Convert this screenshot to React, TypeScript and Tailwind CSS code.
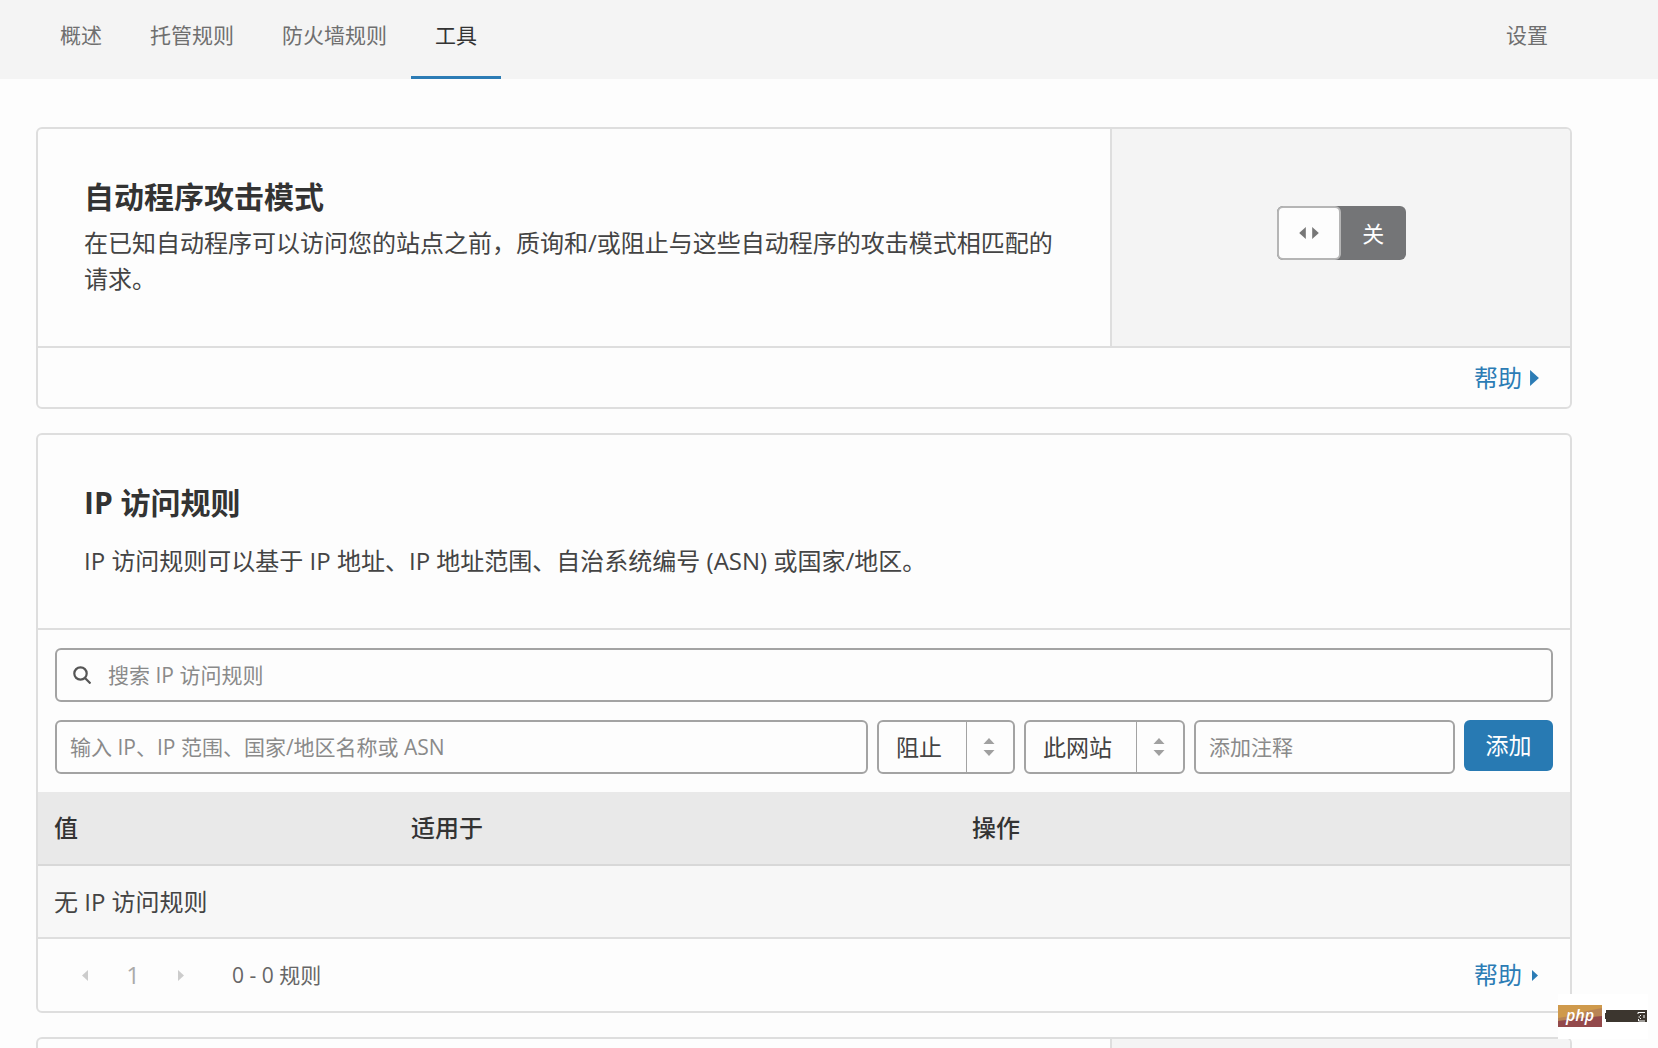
import { useState } from "react"
import type { ReactNode } from "react"

const tabs = ["概述", "托管规则", "防火墙规则", "工具"]

function Triangle({ points, className }: { points: string; className: string }) {
  return (
    <svg viewBox="0 0 10 18" className={className} fill="currentColor" aria-hidden="true">
      <polygon points={points} />
    </svg>
  )
}

function LeftArrow({ className }: { className: string }) {
  return <Triangle points="10,0 10,18 0,9" className={className} />
}

function RightArrow({ className }: { className: string }) {
  return <Triangle points="0,0 0,18 10,9" className={className} />
}

function NavTab({ label, active }: { label: string; active?: boolean }) {
  return (
    <a
      href="#"
      aria-current={active ? "page" : undefined}
      className={
        active
          ? "flex h-[79px] items-center border-b-3 border-[#2c7cb5] px-6 pb-1.5 text-[#333]"
          : "flex h-[79px] items-center border-b-3 border-transparent px-6 pb-1.5 text-[#6f6f6f]"
      }
    >
      {label}
    </a>
  )
}

function Card({ children }: { children: ReactNode }) {
  return <section className="overflow-hidden rounded-md border-2 border-[#dedede] bg-[#fdfdfd]">{children}</section>
}

function Select({ label, options, className }: { label: string; options: string[]; className: string }) {
  return (
    <div className={`relative h-[54px] shrink-0 rounded-md border-2 border-[#a3a3a3] ${className}`}>
      <select
        aria-label={label}
        className="h-full w-full appearance-none bg-transparent pl-[17px] text-[23px] text-[#444] outline-none"
      >
        {options.map((option) => (
          <option key={option}>{option}</option>
        ))}
      </select>
      <span className="pointer-events-none absolute inset-y-0 right-0 flex w-[47px] items-center justify-center border-l border-[#a3a3a3] pr-0.5">
        <svg viewBox="0 0 12 20" className="h-5 w-3 fill-[#a0a0a0]" aria-hidden="true">
          <polygon points="6,1 11.500,7 0.500,7" />
          <polygon points="0.500,13 11.500,13 6,19" />
        </svg>
      </span>
    </div>
  )
}

function Toggle() {
  const [on, setOn] = useState(false)
  return (
    <button
      type="button"
      role="switch"
      aria-checked={on}
      aria-label="自动程序攻击模式"
      onClick={() => setOn(!on)}
      className="flex h-[54px] w-[129px] rounded-md bg-[#747577] text-[22px] text-white"
    >
      <span className="flex h-full w-16 items-center justify-center gap-[6px] rounded-md border-2 border-[#b5b5b5] bg-[#fdfdfd] text-[#777]">
        <LeftArrow className="h-3 w-[7px]" />
        <RightArrow className="h-3 w-[7px]" />
      </span>
      <span className="flex h-full flex-1 items-center justify-center">{on ? "开" : "关"}</span>
    </button>
  )
}

function Watermark() {
  return (
    <div className="absolute right-[10px] bottom-[10px] flex h-[45px] w-[90px] items-start gap-[3px] bg-white pt-[11px]">
      <svg
        viewBox="0 0 44 22"
        className="h-[22px] w-11 overflow-visible font-['Open_Sans',sans-serif] text-[16px] font-semibold italic"
      >
        <rect width="44" height="22" fill="#93494b" />
        <path d="M0 0H44V11L24 13L0 16Z" fill="#b98455" />
        <path d="M0 0H44V3L24 7L12 11L0 13Z" fill="#cf9a4c" />
        <text x="22" y="16" textAnchor="middle" fill="#fff">
          php
        </text>
      </svg>
      <svg viewBox="0 0 42 12" className="mt-[5px] h-3 w-[42px]" aria-hidden="true">
        <path d="M1 0H42V12H1V9H0V3H1Z" fill="#3c362f" />
        <path d="M33 4V2.500H40M33.500 9V11H40M33.500 7H35M35.500 5V6M35.500 8V9M39 5V8" stroke="#fff" fill="none" />
      </svg>
    </div>
  )
}

export default function App() {
  return (
    <div className="relative flex min-h-screen flex-col bg-[#fdfdfd] font-['Open_Sans','Noto_Sans_CJK_SC',sans-serif] text-[24px] leading-9 text-[#444]">
      <nav className="flex justify-between bg-[#f4f4f4] pr-[86px] pl-9 text-[21px]">
        <div className="flex">
          {tabs.map((tab) => (
            <NavTab key={tab} label={tab} active={tab === "工具"} />
          ))}
        </div>
        <NavTab label="设置" />
      </nav>

      <main className="flex flex-1 flex-col gap-6 pt-12 pr-[86px] pl-9">
        <Card>
          <div className="flex h-[219px] border-b-2 border-[#dedede]">
            <div className="flex-1 pt-12 pr-12 pl-[46px]">
              <h2 className="text-[30px] leading-10 font-bold text-[#333]">自动程序攻击模式</h2>
              <p className="mt-2">
                在已知自动程序可以访问您的站点之前，质询和/或阻止与这些自动程序的攻击模式相匹配的请求。
              </p>
            </div>
            <div className="flex w-[30%] items-center justify-center border-l-2 border-[#dedede] bg-[#f4f4f4] pb-[10px]">
              <Toggle />
            </div>
          </div>
          <div className="flex h-[59px] items-center justify-end pr-[31px]">
            <a href="#" className="flex items-center gap-2 text-[#2c7cb5]">
              帮助
              <RightArrow className="h-4 w-[9px]" />
            </a>
          </div>
        </Card>

        <Card>
          <div className="h-[195px] border-b-2 border-[#dedede] pt-12 pl-[46px]">
            <h2 className="text-[30px] leading-10 font-bold text-[#333]">IP 访问规则</h2>
            <p className="mt-5">IP 访问规则可以基于 IP 地址、IP 地址范围、自治系统编号 (ASN) 或国家/地区。</p>
          </div>

          <form className="flex flex-col gap-[18px] px-[17px] py-[18px]" onSubmit={(e) => e.preventDefault()}>
            <label className="flex h-[54px] items-center gap-[17px] rounded-md border-2 border-[#a3a3a3] px-4">
              <svg viewBox="0 0 18 18" className="h-[18px] w-[18px] shrink-0 fill-none stroke-[#555]" strokeWidth="2.2" aria-hidden="true">
                <circle cx="7.500" cy="7.500" r="6.200" />
                <path d="M12 12L17.500 17.500" />
              </svg>
              <input
                type="search"
                aria-label="搜索 IP 访问规则"
                placeholder="搜索 IP 访问规则"
                className="min-w-0 flex-1 text-[21px] outline-none placeholder:text-[#8a8a8a]"
              />
            </label>
            <div className="flex items-start gap-[9px]">
              <input
                type="text"
                aria-label="IP"
                placeholder="输入 IP、IP 范围、国家/地区名称或 ASN"
                className="h-[54px] min-w-0 flex-1 rounded-md border-2 border-[#a3a3a3] px-[13px] text-[21px] outline-none placeholder:text-[#8a8a8a]"
              />
              <Select label="操作" options={["阻止", "质询", "允许"]} className="w-[138px]" />
              <Select label="适用于" options={["此网站", "所有网站"]} className="w-[161px]" />
              <input
                type="text"
                aria-label="添加注释"
                placeholder="添加注释"
                className="h-[54px] w-[261px] shrink-0 rounded-md border-2 border-[#a3a3a3] px-[13px] text-[21px] outline-none placeholder:text-[#8a8a8a]"
              />
              <button type="submit" className="h-[51px] w-[89px] shrink-0 rounded-md bg-[#287ab3] pb-0.5 text-[23px] text-white">
                添加
              </button>
            </div>
          </form>

          <table className="w-full table-fixed border-b-2 border-[#dedede] text-left">
            <thead className="border-b-2 border-[#d8d8d8] bg-[#e9e9e9] text-[#333]">
              <tr className="h-[73px]">
                <th className="w-[357px] px-4 font-medium">值</th>
                <th className="w-[561px] px-4 font-medium">适用于</th>
                <th className="px-4 font-medium">操作</th>
              </tr>
            </thead>
            <tbody className="bg-[#f7f7f7]">
              <tr className="h-[73px]">
                <td colSpan={3} className="px-4">
                  无 IP 访问规则
                </td>
              </tr>
            </tbody>
          </table>

          <div className="flex h-[72px] items-center justify-between pr-8 pl-11">
            <div className="flex items-center">
              <button type="button" aria-label="上一页" disabled className="text-[#ccc]">
                <LeftArrow className="h-[11px] w-[6px]" />
              </button>
              <span className="w-[90px] text-center text-[#aaa]">1</span>
              <button type="button" aria-label="下一页" disabled className="text-[#ccc]">
                <RightArrow className="h-[11px] w-[6px]" />
              </button>
              <span className="ml-12 text-[21px] text-[#666]">0 - 0 规则</span>
            </div>
            <a href="#" className="flex items-center gap-[10px] text-[#2c7cb5]">
              帮助
              <RightArrow className="h-[11px] w-[6px]" />
            </a>
          </div>
        </Card>

        <section className="flex min-h-3 flex-1 overflow-hidden rounded-t-md border-2 border-b-0 border-[#dedede]">
          <div className="flex-1" />
          <div className="w-[30%] border-l-2 border-[#dedede] bg-[#f4f4f4]" />
        </section>
      </main>

      <Watermark />
    </div>
  )
}
